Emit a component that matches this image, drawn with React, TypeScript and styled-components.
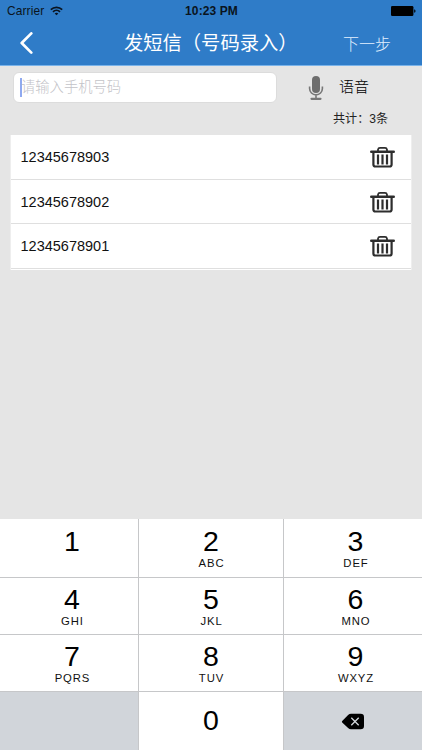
import React from "react";
import styled, { createGlobalStyle } from "styled-components";

const GlobalStyle = createGlobalStyle`
  * { box-sizing: border-box; }
  body { margin: 0; background: #e5e5e5; }
`;

const Screen = styled.div`
  width: 422px;
  height: 750px;
  display: flex;
  flex-direction: column;
  overflow: hidden;
  background: #e5e5e5;
  color: #111;
  font-family: "Liberation Sans", "Noto Sans CJK SC", sans-serif;
`;

const Header = styled.header`
  height: 66px;
  flex: none;
  background: #2f7cc8;
  border-bottom: 1px solid #79b3ea;
`;

const StatusBar = styled.div`
  height: 22px;
  display: grid;
  grid-template-columns: 1fr auto 1fr;
  align-items: center;
  padding: 0 6px 0 7px;
  font-size: 11.9px;
  line-height: 22px;
  color: #0a1420;
`;

const Carrier = styled.div`
  display: flex;
  align-items: center;
  gap: 6px;
  letter-spacing: 0.15px;
`;

const Clock = styled.div`
  font-weight: bold;
  font-size: 12px;
  letter-spacing: 0.1px;
`;

const BatterySlot = styled.div`
  display: flex;
  justify-content: flex-end;
`;

const NavBar = styled.nav`
  height: 43px;
  display: flex;
  align-items: center;
  color: #fff;
`;

const BackButton = styled.button`
  width: 124px;
  height: 43px;
  padding: 0 0 0 19px;
  border: 0;
  background: none;
  display: flex;
  align-items: center;
`;

const Title = styled.h1`
  margin: 0;
  width: 219px;
  font-size: 19.3px;
  font-weight: 400;
  line-height: 42px;
  white-space: nowrap;
`;

const NextButton = styled.button`
  padding: 0 0 1px;
  border: 0;
  background: none;
  color: #e4f1ff;
  font: 300 16px/41px "Noto Sans CJK SC", sans-serif;
`;

const EntryRow = styled.div`
  height: 43px;
  flex: none;
  display: flex;
  align-items: center;
  padding: 0 0 1px 13px;
`;

const PhoneField = styled.div`
  width: 264px;
  height: 31px;
  display: flex;
  align-items: center;
  padding-left: 6px;
  border: 1px solid #dcdcdc;
  border-radius: 6px;
  background: #fff;
`;

const Caret = styled.span`
  width: 2px;
  height: 19px;
  margin-right: -1px;
  background: #8fa9f0;
`;

const Placeholder = styled.span`
  color: #c3c3c8;
  font-size: 14.3px;
  font-weight: 300;
  line-height: 26px;
  padding-bottom: 1px;
`;

const VoiceButton = styled.button`
  display: flex;
  align-items: center;
  gap: 15px;
  margin-left: 31px;
  padding: 0;
  border: 0;
  background: none;
  color: #222;
  font: 300 15px/28px "Noto Sans CJK SC", sans-serif;
`;

const VoiceLabel = styled.span`
  padding-bottom: 2px;
  color: #000;
`;

const Total = styled.div`
  height: 26px;
  flex: none;
  padding-left: 333px;
  font-size: 12.1px;
  line-height: 20px;
  white-space: nowrap;
  color: #222;
`;

const NumberList = styled.ul`
  list-style: none;
  margin: 0 10px;
  padding: 0 0 1px;
  height: 135px;
  flex: none;
  background: #fff;
  border: solid #eeeeee;
  border-width: 0 1px;
`;

const NumberRow = styled.li`
  height: 44.7px;
  display: flex;
  align-items: center;
  justify-content: space-between;
  padding: 0 16px 0 9.5px;
  border-bottom: 1px solid #dfdfdf;
  font-size: 14.5px;
`;

const Keypad = styled.div`
  margin-top: auto;
  height: 231px;
  flex: none;
  display: grid;
  grid-template-columns: 139px 145px 138px;
  grid-template-rows: 59px 57px 57px 58px;
`;

const Key = styled.div<{ $shift?: number; $muted?: boolean; $column: number; $top?: number; $last?: boolean }>`
  display: flex;
  flex-direction: column;
  align-items: center;
  padding-top: ${(p) => p.$top ?? 4}px;
  padding-left: ${(p) => p.$shift ?? 0}px;
  background: ${(p) => (p.$muted ? "#d1d5da" : "#fff")};
  border: solid #c6c7c9;
  border-width: 0 ${(p) => (p.$column < 2 ? 1 : 0)}px ${(p) => (p.$last ? 0 : 1)}px 0;
`;

const Digit = styled.span`
  font-size: 28.5px;
  line-height: 33px;
  color: #000;
`;

const Letters = styled.span`
  margin-top: -1px;
  font-size: 11.3px;
  line-height: 12px;
  letter-spacing: 0.9px;
  padding-left: 1px;
  color: #111;
`;

const DeleteKey = styled(Key)`
  padding: 2px 0 0 0;
  justify-content: center;
`;

const WifiIcon = () => (
  <svg width="13" height="10" viewBox="0 0 13 10" fill="none" stroke="#0a1420" strokeWidth="1.7">
    <path d="M.8 3.6a8.2 8.2 0 0 1 11.4 0M3 5.8a5.1 5.1 0 0 1 7 0" />
    <path d="M6.5 9.3 4.7 7.5a2.6 2.6 0 0 1 3.6 0Z" fill="#0a1420" stroke="none" />
  </svg>
);

const BatteryIcon = () => (
  <svg width="25" height="10" viewBox="0 0 25 10" fill="#000">
    <rect width="22.4" height="10" rx="1.3" />
    <path d="M23.2 3.2c1.8.5 1.8 3.1 0 3.6Z" />
  </svg>
);

const BackIcon = () => (
  <svg width="15" height="24" viewBox="0 0 15 24" fill="none" stroke="#fff" strokeWidth="2.7" strokeLinecap="round" strokeLinejoin="round">
    <path d="M12.3 1.4 2.7 11l9.6 9.6" />
  </svg>
);

const MicIcon = () => (
  <svg width="16" height="26" viewBox="0 0 16 26" fill="none" stroke="#777" strokeWidth="1.6">
    <rect x="4" y="2" width="8" height="17" rx="4" fill="#6d6d6d" stroke="none" />
    <path d="M1.6 12.5v2a6.4 6.4 0 0 0 12.8 0v-2M8 21v3" />
    <path d="M3.5 24.8h9" strokeWidth="2.2" strokeLinecap="round" />
  </svg>
);

const TrashIcon = () => (
  <svg width="25" height="22" viewBox="0 0 25 22" fill="none" stroke="#2d2d2d">
    <path d="M1.3 5.7h22.4" strokeWidth="2.6" strokeLinecap="round" />
    <path d="M8 5V3.6Q8.3 1.9 10 1.9h5q1.7 0 2 1.7V5" strokeWidth="1.8" />
    <path d="M3.4 6.5V18.5q0 2 2 2h14.2q2 0 2-2V6.5" strokeWidth="2.2" />
    <path d="M8 8.6v9.8M12.5 8.6v9.8M17 8.6v9.8" strokeWidth="2.2" />
  </svg>
);

const DeleteIcon = () => (
  <svg width="24" height="18" viewBox="0 0 24 18">
    <path d="M1.2 8.1 7.1 2Q8.4.8 10 .8h9.6Q23 .8 23 4v9q0 3.3-3.4 3.3H10q-1.6 0-2.9-1.2L1.2 9.5Q.5 8.8 1.2 8.1Z" fill="#000" />
    <path d="m10.3 4.8 7.4 7.5m0-7.5-7.4 7.5" stroke="#d1d5da" strokeWidth="1.3" />
  </svg>
);

const numbers = ["12345678903", "12345678902", "12345678901"];
const keys = [
  ["1", ""], ["2", "ABC"], ["3", "DEF"],
  ["4", "GHI"], ["5", "JKL"], ["6", "MNO"],
  ["7", "PQRS"], ["8", "TUV"], ["9", "WXYZ"],
];
const shifts = [6, 0, 5];

export default function App() {
  return (
    <>
      <GlobalStyle />
      <Screen>
        <Header>
          <StatusBar>
            <Carrier>Carrier <WifiIcon /></Carrier>
            <Clock>10:23 PM</Clock>
            <BatterySlot><BatteryIcon /></BatterySlot>
          </StatusBar>
          <NavBar>
            <BackButton aria-label="返回"><BackIcon /></BackButton>
            <Title>发短信（号码录入）</Title>
            <NextButton>下一步</NextButton>
          </NavBar>
        </Header>
        <EntryRow>
          <PhoneField>
            <Caret />
            <Placeholder>请输入手机号码</Placeholder>
          </PhoneField>
          <VoiceButton><MicIcon /><VoiceLabel>语音</VoiceLabel></VoiceButton>
        </EntryRow>
        <Total>共计：3条</Total>
        <NumberList>
          {numbers.map((n) => (
            <NumberRow key={n}>{n}<TrashIcon /></NumberRow>
          ))}
        </NumberList>
        <Keypad>
          {keys.map(([digit, letters], i) => (
            <Key key={digit} $column={i % 3} $shift={shifts[i % 3]} $top={i < 3 ? 6 : 5}>
              <Digit>{digit}</Digit>
              <Letters>{letters}</Letters>
            </Key>
          ))}
          <Key $column={0} $muted $last />
          <Key $column={1} $top={12} $last><Digit>0</Digit></Key>
          <DeleteKey $column={2} $muted $last><DeleteIcon /></DeleteKey>
        </Keypad>
      </Screen>
    </>
  );
}
